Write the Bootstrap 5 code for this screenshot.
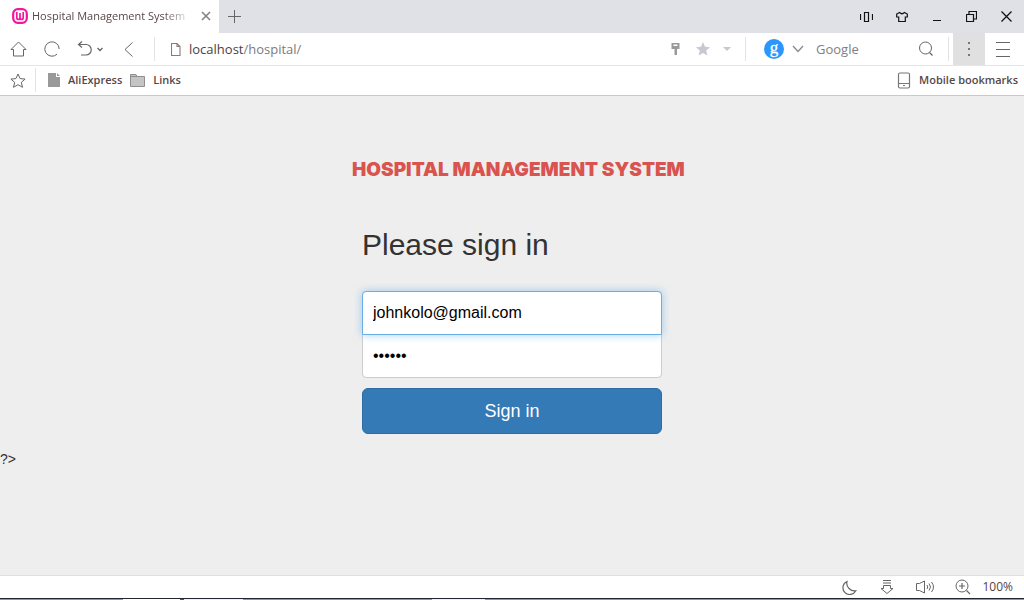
<!DOCTYPE html>
<html lang="en">
<head>
<meta charset="utf-8">
<meta name="viewport" content="width=device-width, initial-scale=1">
<title>Hospital Management System</title>
<link rel="stylesheet" href="https://cdn.jsdelivr.net/npm/bootstrap@5.3.0/dist/css/bootstrap.min.css">
<style>
  body { font-family: "Liberation Sans", Arial, sans-serif; font-size: 14px; line-height: 20px; color: #333; background: #eee; }
  .chrome-ui { font-family: "Open Sans", "Segoe UI", sans-serif; font-size: 12px; line-height: 16px; color: #5a4a4a; }
  .chrome-ui button { border: 0; background: none; padding: 0; color: #666; display: flex; align-items: center; justify-content: center; flex: none; align-self: stretch; }
  svg { display: block; flex: none; fill: none; stroke: currentColor; }
  .tabstrip { height: 33px; background: #e0e1e6; }
  .page-tab { width: 219px; background: #fff; padding-left: 12px; padding-bottom: 2px; gap: 4px; }
  .tab-title { width: 160px; font-size: 11px; color: #5a4646; white-space: nowrap; -webkit-mask-image: linear-gradient(90deg, #000 82%, transparent); mask-image: linear-gradient(90deg, #000 82%, transparent); }
  .w-20px { width: 20px; } .w-28px { width: 28px; } .w-32px { width: 32px; } .w-35px { width: 35px; } .w-36px { width: 36px; } .w-44px { width: 44px; }
  .window-controls button { color: #111; }
  .toolbar { height: 33px; background: #fff; border-bottom: 1px solid #e4e5e9; }
  .divider { width: 1px; height: 24px; background: #e2e3e7; flex: none; }
  .location-divider { margin-left: 10px; }
  .address { min-width: 0; border: 0; outline: 0; padding: 0; background: none; font-size: 13px; line-height: 20px; color: #7b7b80; }
  .address b { font-weight: 400; color: #4d3f42; }
  .search-text { width: 92px; }
  .search-text::placeholder { color: #808084; opacity: 1; }
  .engine { width: 20px; height: 20px; border-radius: 50%; background: #2b96fb; margin-left: 18px; }
  .chrome-ui .menu-dots { background: #e0e0e0; }
  .bookmarks { height: 30px; background: #fff; border-bottom: 1px solid #c9c9cb; padding: 0 6px 1px 0; }
  .bookmarks a { color: #55474a; text-decoration: none; font-size: 11px; font-weight: 600; display: flex; align-items: center; }
  .signin { width: 320px; padding-top: 64px; }
  .brand-line { font-family: "Arial Black", Inter, sans-serif; font-weight: 900; font-size: 19px; line-height: 20px; color: #d9534f; white-space: nowrap; }
  .signin form { padding: 48px 10px 15px; }
  .signin h2 { font-size: 30px; line-height: 34px; margin-bottom: 29px; font-weight: 400; }
  .signin .form-control { height: 44px; padding: 8px 10px; font-size: 16px; line-height: 24px; color: #000; border-color: #ccc; border-radius: 4px; box-shadow: none; }
  .signin .email { position: relative; z-index: 1; border-radius: 4px 4px 0 0; border-color: #66afe9; box-shadow: 0 0 8px rgba(102,175,233,.6); }
  .signin .password { margin-top: -1px; margin-bottom: 10px; border-radius: 0 0 4px 4px; }
  .signin .btn { height: 46px; font-size: 18px; line-height: 24px; border-radius: 6px; background: #337ab7; border-color: #2e6da4; color: #fff; }
  .statusbar { height: 24px; background: #fff; border-top: 1px solid #dfdfdf; border-bottom: 1px solid #222631; padding-right: 11px; }
  .statusbar button { width: 38px; }
  .statusbar .zoom-level { width: auto; color: #5a3f44; }
  .desktop-edge { height: 1px; background: linear-gradient(90deg, #8d97a8 12%, #fff 12% 17.600%, #555 17.600% 18%, #eef 18% 23.700%, #8d97a8 23.700% 42.200%, #eef 42.200% 47.400%, #8d97a8 47.400%); }
</style>
</head>
<body class="d-flex flex-column min-vh-100">
<header class="chrome-ui">
  <div class="tabstrip d-flex">
    <div class="page-tab d-flex align-items-center">
      <svg width="16" height="16" viewBox="0 0 16 16" style="color:#f0189c"><rect x="1.2" y="1.2" width="13.6" height="13.6" rx="4.5" stroke-width="2.2"/><path d="M4.800 4v5.500q0 2 1.600 2T8 9.500V5v4.500q0 2 1.600 2t1.600-2V4" stroke-width="1.700"/></svg>
      <span class="tab-title">Hospital Management System</span>
      <button aria-label="Close tab" class="w-20px"><svg width="10" height="10"><path d="M1 1l8 8M9 1L1 9" stroke="#8b8080" stroke-width="1.600"/></svg></button>
    </div>
    <button aria-label="New tab" class="w-32px"><svg width="14" height="14"><path d="M6.500 0v13M0 6.500h13"/></svg></button>
    <div class="window-controls d-flex ms-auto">
      <button aria-label="Split" class="w-35px"><svg width="13" height="12"><path d="M4.500 1.500h4v9h-4zM.5 3v6M12.500 3v6" stroke-width="1.200"/></svg></button>
      <button aria-label="Skins" class="w-35px"><svg width="12" height="12"><path d="M3.500 1.500L.7 3v3h2v4.500h6.600V6h2V3L8.500 1.500Q6 4 3.500 1.500z" stroke-width="1.200"/></svg></button>
      <button aria-label="Minimize" class="w-35px"><svg width="8" height="9"><path d="M0 8.500h8"/></svg></button>
      <button aria-label="Restore" class="w-35px"><svg width="11" height="11"><path d="M.5 3.500h7v7h-7zM3 3V.5h7.500V8H8" stroke-width="1.200"/></svg></button>
      <button aria-label="Close" class="w-35px"><svg width="11" height="11"><path d="M.5.5l10 10M10.500.5l-10 10" stroke-width="1.300"/></svg></button>
    </div>
  </div>

  <div class="toolbar d-flex align-items-center">
    <button aria-label="Home" class="w-36px"><svg width="17" height="16"><path d="M1 8.500L8.500 1 16 8.500H13.500V15h-10V8.500z"/></svg></button>
    <button aria-label="Reload" class="w-32px"><svg width="16" height="16"><path d="M13 13.200A7.200 7.200 0 1 1 15.200 8"/></svg></button>
    <button aria-label="Undo" class="w-44px"><svg width="26" height="16"><path d="M5 .5L1.500 3.500l3.500 3M1.500 3.500h7.500a5 5 0 0 1 0 10.500H4" stroke-width="1.200"/><path d="M20.500 7l2.500 2.500L25.500 7" stroke-width="1.300"/></svg></button>
    <button aria-label="Back" class="w-32px"><svg width="9" height="15"><path d="M8.500.5l-7.500 7 7.500 7"/></svg></button>
    <span class="divider location-divider me-3"></span>
    <svg class="me-2" width="10" height="13" color="#867c7a"><path d="M.5.5h5.500l3 3v9H.5zM6 .5v3h3" stroke-width="1.100"/></svg>
    <a class="address flex-grow-1 text-decoration-none" href="#"><b>localhost</b>/hospital/</a>
    <button aria-label="Passwords" class="w-28px"><svg width="9" height="12"><path fill="#999" stroke="none" fill-rule="evenodd" d="M.5 0h8v6H6v6H3.500V6h-3zM2.500 1.500V3h4V1.500z"/></svg></button>
    <button aria-label="Add bookmark" class="w-28px"><svg width="14" height="14"><path fill="#c6c8d2" stroke="none" d="M7 0l2 4.800 5 .4-3.800 3.300 1.200 5L7 10.900l-4.400 2.600 1.200-5L0 5.200l5-.4z"/></svg></button>
    <button aria-label="Address history" class="w-20px"><svg width="8" height="4"><path fill="#c6c8d2" stroke="none" d="M0 0h8L4 4z"/></svg></button>
    <span class="divider ms-2"></span>
    <span class="engine me-1"><svg width="20" height="20"><text x="10" y="14" text-anchor="middle" font-family="Liberation Serif, serif" font-size="17" fill="#fff" stroke="#fff" stroke-width=".3">g</text></svg></span>
    <button aria-label="Search engine" class="w-20px"><svg width="12" height="8"><path d="M1 1l5 5.500L11 1" stroke="#8a8a8e" stroke-width="1.300"/></svg></button>
    <input class="address search-text ms-2" type="text" placeholder="Google" aria-label="Search">
    <button aria-label="Search" class="w-36px"><svg width="16" height="16"><circle cx="7.500" cy="7" r="6"/><path d="M11.500 11.500l3 3" stroke-width="1.300"/></svg></button>
    <span class="divider ms-1"></span>
    <button aria-label="More" class="menu-dots w-32px ms-1"><svg width="2" height="14"><path fill="#777" stroke="none" d="M0 0h2v2H0zM0 6h2v2H0zM0 12h2v2H0z"/></svg></button>
    <button aria-label="Menu" class="w-35px me-1"><svg width="14" height="15"><path d="M0 .5h14M0 7.500h14M0 14.500h14"/></svg></button>
  </div>

  <nav class="bookmarks d-flex align-items-center" aria-label="Bookmarks">
    <button aria-label="Bookmarks" class="w-35px"><svg width="16" height="15"><path d="M8 1l2.100 4.600 5 .5-3.800 3.300 1.200 4.900L8 11.700l-4.500 2.600 1.200-4.900L.9 6.100l5-.5z"/></svg></button>
    <span class="divider"></span>
    <a href="#" class="ms-2"><svg class="ms-1 me-2" width="12" height="14"><path fill="#999" stroke="none" d="M0 0h8v4h4v10H0zM9 0l3 3H9z"/></svg>AliExpress</a>
    <a href="#" class="ms-2"><svg class="me-2" width="15" height="13"><path fill="#c4c4c4" stroke="#8e8e8e" d="M.5.5H6l1 2h7.500v10H.5zM.5 2.500H7"/></svg>Links</a>
    <a href="#" class="ms-auto"><svg class="me-2" width="14" height="17" color="#777"><rect x="1.500" y="1" width="11" height="15" rx="1.500" stroke-width="1.200"/><path d="M1.500 11.500h11M6 13.500h2"/></svg>Mobile bookmarks</a>
  </nav>
</header>

<main class="flex-grow-1">
  <section class="signin mx-auto">
    <h1 class="brand-line m-0">HOSPITAL MANAGEMENT SYSTEM</h1>
    <form>
      <h2>Please sign in</h2>
      <label class="visually-hidden" for="email">Email address</label>
      <input class="form-control email" id="email" type="email" value="johnkolo@gmail.com">
      <label class="visually-hidden" for="password">Password</label>
      <input class="form-control password" id="password" type="password" value="secret">
      <button class="btn btn-primary w-100" type="submit">Sign in</button>
    </form>
  </section>
  ?&gt;
</main>

<footer class="chrome-ui">
  <div class="statusbar d-flex justify-content-end align-items-center">
    <button aria-label="Night mode"><svg width="15" height="15"><path d="M5 1.500A6.800 6.800 0 1 0 13.800 10.800Q10 11.500 7 8.500T5 1.500z" stroke-width="1.200"/></svg></button>
    <button aria-label="Downloads"><svg width="14" height="14"><path d="M3 .5h8M3 3h8M3.500 5.500h7V8.500h2.500L7 13.500 1 8.500h2.500z"/></svg></button>
    <button aria-label="Sound"><svg width="20" height="14"><path d="M1.500 3.500h3L9.500 1v12l-5-2.500h-3zM12 5q1.500 2 0 4M14 3.500q3 3.500 0 7M16.500 2q4 5 0 10"/></svg></button>
    <button aria-label="Zoom"><svg width="16" height="16"><circle cx="7" cy="7" r="6"/><path d="M7 4v6M4 7h6M11.500 11.500l3.500 3.500" stroke-width="1.200"/></svg></button>
    <button class="zoom-level">100%</button>
  </div>
  <div class="desktop-edge"></div>
</footer>
<script src="https://cdn.jsdelivr.net/npm/bootstrap@5.3.0/dist/js/bootstrap.bundle.min.js"></script>
</body>
</html>
